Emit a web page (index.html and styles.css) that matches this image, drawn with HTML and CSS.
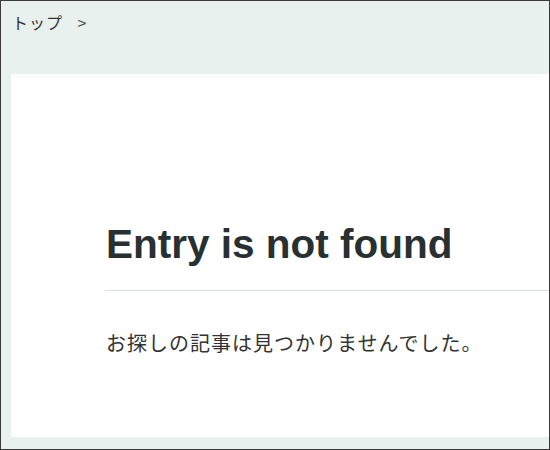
FILE: index.html
```html
<!DOCTYPE html>
<html lang="ja">
<head>
    <meta charset="UTF-8">
    <meta name="viewport" content="width=device-width, initial-scale=1.0">
    <title>Entry is not found</title>
    <link rel="stylesheet" href="styles.css">
</head>
<body>
    <div class="page">
        <div class="breadcrumb">
            <a href="#">トップ</a>
            <span class="sep">&gt;</span>
        </div>
        <div class="main-container">
            <h1 class="entry-title">Entry is not found</h1>
            <p class="entry-text">お探しの記事は見つかりませんでした。</p>
        </div>
    </div>
</body>
</html>
```

FILE: styles.css
```css
body {
    margin: 0;
    padding: 0;
    font-family: "Liberation Sans", "Noto Sans CJK JP", sans-serif;
}

.page {
    box-sizing: border-box;
    width: 550px;
    height: 450px;
    border: 1px solid #3a3a3a;
    background-color: #e8f1ee;
    display: flex;
    flex-direction: column;
    overflow: hidden;
}

.breadcrumb {
    height: 73px;
    box-sizing: border-box;
    padding: 9px 11px 0;
    font-family: "Noto Sans CJK JP", sans-serif;
    font-size: 16px;
    line-height: 24px;
    letter-spacing: 1px;
    color: #333;
}

.breadcrumb a {
    color: #333;
    text-decoration: none;
}

.breadcrumb .sep {
    margin-left: 10px;
    color: #555;
}

.main-container {
    background-color: #fff;
    margin-left: 10px;
    height: 363px;
    box-sizing: border-box;
    padding: 147px 0 0 94px;
}

.entry-title {
    margin: 0;
    padding: 0 0 23px 1px;
    border-bottom: 1px solid #d3dcdf;
    font-size: 40.5px;
    line-height: 46px;
    font-weight: bold;
    color: #283031;
}

.entry-text {
    margin: 37px 0 0 1px;
    font-family: "Noto Sans CJK JP", sans-serif;
    font-size: 20px;
    line-height: 30px;
    letter-spacing: 1px;
    color: #333;
}
```
